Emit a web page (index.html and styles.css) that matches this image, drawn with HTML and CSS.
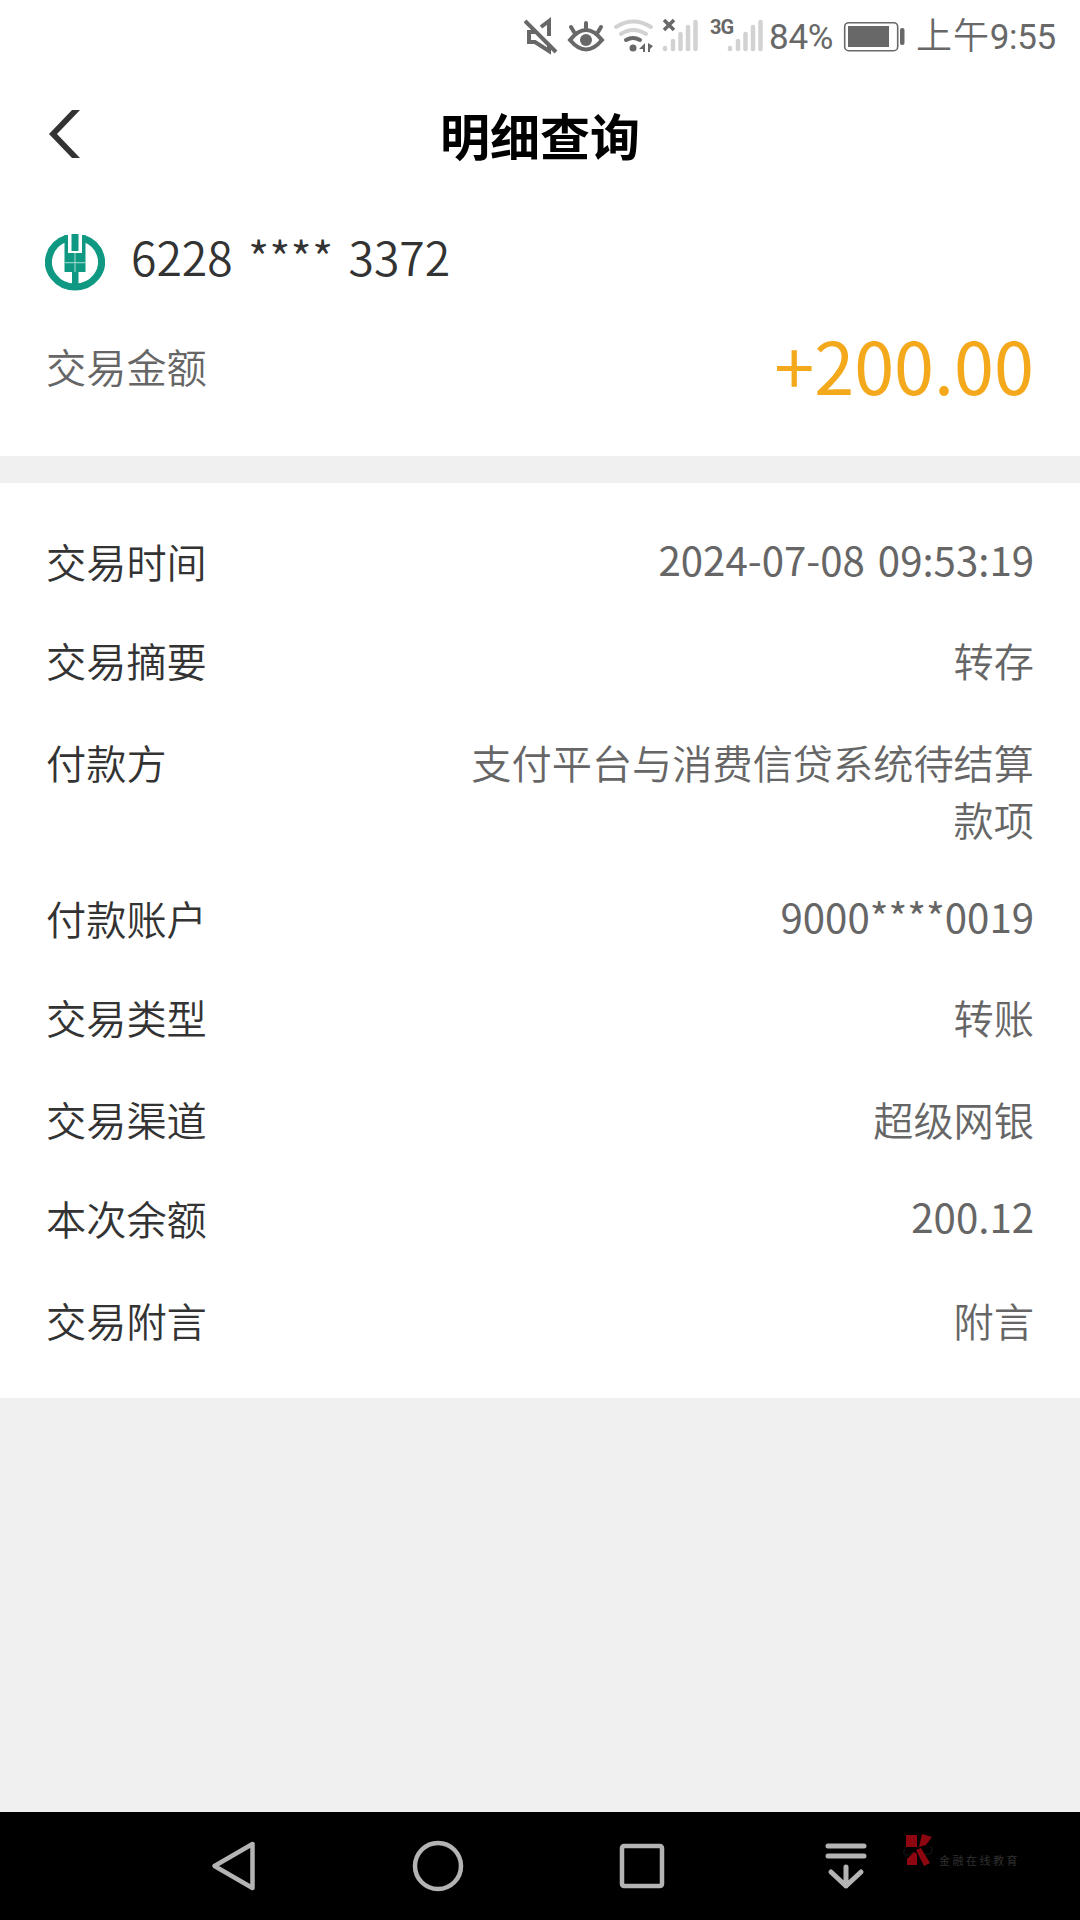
FILE: index.html
```
<!DOCTYPE html>
<html lang="zh-CN">
<head>
    <meta charset="UTF-8">
    <meta name="viewport" content="width=device-width, initial-scale=1.0">
    <title>明细查询</title>
    <link rel="stylesheet" href="styles.css">
</head>
<body>
    <div class="page">
        <!-- Status bar -->
        <div class="statusbar">
            <svg class="status-icons" width="244" height="74" viewBox="0 0 244 74" fill="none">
                <g stroke="#686868" stroke-width="4">
                    <path d="M1 21L32 52"/>
                    <path d="M17 27L25 21V36M11 32H5V42H11L25 51V44"/>
                </g>
                <g stroke="#686868" stroke-width="4" stroke-linecap="round">
                    <path d="M46 40Q62 20 78 40Q62 59 46 40Z"/>
                    <path d="M50 32L47 27M62 28V23M74 32L77 27"/>
                </g>
                <circle cx="62" cy="40" r="6" fill="#686868"/>
                <g stroke-width="4" stroke-linecap="round">
                    <path d="M92 27Q109 16 127 27M97 34Q109 26 122 34" stroke="#d2d2d2"/>
                    <path d="M102 40Q109 36 116 40" stroke="#686868"/>
                </g>
                <circle cx="109" cy="48" r="3.5" fill="#686868"/>
                <path d="M121 43V52H119V49H115ZM124 43L129 46L126 49V52H124Z" fill="#686868"/>
                <path d="M140 20L150 30M150 20L140 30" stroke="#686868" stroke-width="3.5"/>
                <path d="M141 49V48M149 49V41M156.5 49V34M164 49V27M171.5 49V22M206 49V48M214 49V41M221.5 49V34M229 49V27M236.5 49V22" stroke="#d2d2d2" stroke-width="4.5" stroke-linecap="round"/>
                <text class="network" x="186" y="34">3G</text>
            </svg>
            <span class="percent">84%</span>
            <svg class="battery" width="64" height="74" viewBox="0 0 64 74">
                <rect x="1.7" y="22.7" width="53" height="28" rx="4" fill="none" stroke="#686868" stroke-width="1.6"/>
                <rect x="5" y="26" width="41" height="21" fill="#686868"/>
                <rect x="57" y="28" width="4.5" height="17" rx="2" fill="#686868"/>
            </svg>
            <span class="clock"><span class="period">上午</span>9:55</span>
        </div>

        <div class="header">
            <svg class="back" width="32" height="50" viewBox="0 0 32 50">
                <path d="M24 1H32L9 25L32 49H24L1 25Z" fill="#333"/>
            </svg>
            <h1>明细查询</h1>
        </div>

        <!-- Card and amount -->
        <div class="summary">
            <div class="card">
                <svg class="bank" width="60" height="58" viewBox="0 0 60 58">
                    <path d="M21 4.5A26.5 25 0 1 0 39 4.5" fill="none" stroke="#0f9982" stroke-width="7"/>
                    <path d="M19.5 1H23V19H37V1H40.5V38H33.5V56H27V38H19.5Z" fill="#0f9982"/>
                    <path d="M26.500 0H33.500V17H26.500Z" fill="#0f9982"/>
                    <path d="M19 28.700H41M30 19V38" fill="none" stroke="#8fd3c7" stroke-width="1.200"/>
                </svg>
                <span class="card-number">6228 **** 3372</span>
            </div>
            <div class="amount-row">
                <span class="amount-label">交易金额</span>
                <span class="amount">+200.00</span>
            </div>
        </div>

        <!-- Transaction details -->
        <div class="details">
            <div class="row"><span class="label">交易时间</span><span class="value number">2024-07-08 09:53:19</span></div>
            <div class="row tall"><span class="label">交易摘要</span><span class="value">转存</span></div>
            <div class="row"><span class="label">付款方</span><span class="value">支付平台与消费信贷系统待结算款项</span></div>
            <div class="row"><span class="label">付款账户</span><span class="value number">9000****0019</span></div>
            <div class="row tall"><span class="label">交易类型</span><span class="value">转账</span></div>
            <div class="row"><span class="label">交易渠道</span><span class="value">超级网银</span></div>
            <div class="row tall"><span class="label">本次余额</span><span class="value number">200.12</span></div>
            <div class="row"><span class="label">交易附言</span><span class="value">附言</span></div>
        </div>

        <!-- Navigation bar -->
        <div class="navbar">
            <svg width="204" height="108" viewBox="0 0 204 108" fill="none" stroke="#b4b4b4" stroke-width="4.5" stroke-linejoin="round">
                <path d="M52.5 32V76L14.5 54Z"/>
            </svg>
            <svg width="204" height="108" viewBox="0 0 204 108" fill="none" stroke="#b4b4b4" stroke-width="4.5">
                <circle cx="34" cy="54" r="23"/>
            </svg>
            <svg width="204" height="108" viewBox="0 0 204 108" fill="none" stroke="#b4b4b4" stroke-width="4.5">
                <rect x="14" y="34" width="40" height="40" rx="2"/>
            </svg>
            <svg width="78" height="108" viewBox="0 0 78 108" fill="none" stroke="#b4b4b4" stroke-width="5" stroke-linecap="round" stroke-linejoin="round">
                <path d="M16 34H52M16 44H52M34 55V74M19 60L34 74L49 60"/>
            </svg>
            <div class="brand">
                <svg width="36" height="36" viewBox="0 0 36 36" fill="#8e0710">
                    <path d="M5 3H16V15H5ZM21 2L31 5L25 13L18 15ZM6 27L13 20L16 22V33H6ZM15 18L20 16L29 31L23 34Z"/>
                    <path d="M4 17C0 23 7 26 12 20M24 22C31 24 33 17 29 14" fill="none" stroke="#1c1c1c"/>
                </svg>
                <span>金融在线教育</span>
            </div>
        </div>
    </div>
</body>
</html>
```
FILE: styles.css
```
* {
    box-sizing: border-box;
}

body {
    margin: 0;
    font-family: "Noto Sans CJK SC", sans-serif;
    color: #333;
    background-color: #f0f0f0;
}

svg {
    display: block;
    flex-shrink: 0;
}

.page {
    width: 1080px;
    height: 1920px;
    display: flex;
    flex-direction: column;
}

.statusbar {
    height: 74px;
    padding-right: 24px;
    display: flex;
    justify-content: flex-end;
    background-color: #fff;
    color: #686868;
    font-family: Roboto, "Noto Sans CJK SC", sans-serif;
    font-size: 35px;
    line-height: 75px;
    letter-spacing: -0.3px;
}

.status-icons {
    margin-right: 1px;
}

.network {
    font-family: Roboto, sans-serif;
    font-size: 20px;
    font-weight: 700;
    fill: #686868;
    letter-spacing: -1px;
}

.battery {
    margin: 0 9px 0 10px;
}

.period {
    font-size: 36px;
    font-weight: 350;
    letter-spacing: 0.8px;
}

.header {
    height: 126px;
    padding: 0 48px 6px;
    display: grid;
    grid-template-columns: 32px 1fr 32px;
    align-items: center;
    background-color: #fff;
}

h1 {
    margin: 0;
    color: #000;
    font-size: 50px;
    font-weight: 700;
    line-height: 74px;
    text-align: center;
}

.summary {
    height: 256px;
    padding: 23px 46px 0 45px;
    background-color: #fff;
}

.card {
    height: 74px;
    display: flex;
    align-items: flex-start;
    gap: 26px;
}

.bank {
    margin-top: 11px;
}

.card-number {
    font-size: 46.3px;
    font-weight: 350;
    line-height: 66px;
    word-spacing: 5px;
}

.amount-row {
    height: 140px;
    padding-left: 1px;
    display: flex;
    align-items: center;
    justify-content: space-between;
    color: #666;
}

.amount-label {
    font-size: 40.2px;
    font-weight: 350;
    line-height: 57px;
    padding-bottom: 3px;
}

.amount {
    color: #f4a91c;
    font-size: 72px;
    font-weight: 400;
    line-height: 100px;
    padding-bottom: 7px;
}

.details {
    height: 915px;
    margin-top: 27px;
    padding: 49px 46px 0;
    background-color: #fff;
    font-size: 40.2px;
    font-weight: 350;
    line-height: 57px;
}

.row {
    display: flex;
    justify-content: space-between;
    padding-bottom: 42px;
}

.row.tall {
    padding-bottom: 45px;
}

.value {
    max-width: 565px;
    color: #666;
    text-align: right;
}

.number {
    font-weight: 400;
    line-height: 53px;
    word-spacing: 4px;
}

.navbar {
    height: 108px;
    margin-top: auto;
    padding-left: 200px;
    display: flex;
    background-color: #000;
}

.brand {
    display: flex;
    gap: 2px;
    padding: 20px 0 0 11px;
    color: #303030;
    font-size: 11px;
    letter-spacing: 2.5px;
    line-height: 56px;
}
```
